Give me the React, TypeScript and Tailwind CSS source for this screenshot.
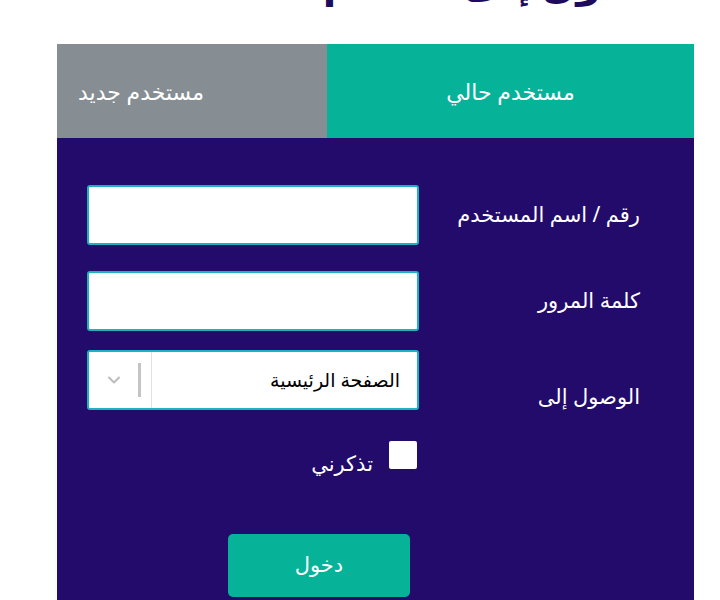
import React, { useState } from 'react'

const font = { fontFamily: '"Noto Sans", "DejaVu Sans", sans-serif' }

const App: React.FC = () => {
  const [tab, setTab] = useState<'current' | 'new'>('current')
  const [remember, setRemember] = useState(false)

  return (
    <div dir="rtl" className="w-[720px] h-[600px] overflow-hidden bg-white" style={font}>
      {/* page title, mostly scrolled out of view */}
      <div className="h-[44px] overflow-hidden">
        <h1 className="pr-[38px] mt-[-47px] text-[40px] leading-[58px] font-bold text-[#1f0b5e] whitespace-nowrap">
          الدخول إلى النظام
        </h1>
      </div>

      <div className="mr-[26px] w-[637px]">
        {/* tabs */}
        <div className="flex h-[94px]">
          <button
            onClick={() => setTab('current')}
            className="w-[367px] h-full bg-[#06b399] text-white text-[22px] flex items-center justify-center"
          >
            مستخدم حالي
          </button>
          <button
            onClick={() => setTab('new')}
            className="flex-1 h-full bg-[#868e94] text-white text-[22px] flex items-center justify-end pl-[21px]"
          >
            مستخدم جديد
          </button>
        </div>

        {/* form */}
        <div className="bg-[#230b6b] pt-[47px] pr-[54px] pl-[30px] pb-10 text-white">
          <div className="flex items-center justify-between">
            <label className="text-[21px]">رقم / اسم المستخدم</label>
            <input className="w-[332px] h-[60px] bg-white rounded-[3px] border-2 border-[#1bb3c4] text-black px-3 outline-none" />
          </div>

          <div className="flex items-center justify-between mt-[26px]">
            <label className="text-[21px]">كلمة المرور</label>
            <input
              type="password"
              className="w-[332px] h-[60px] bg-white rounded-[3px] border-2 border-[#1bb3c4] text-black px-3 outline-none"
            />
          </div>

          <div className="flex items-start justify-between mt-[19px]">
            <label className="text-[21px] mt-[31px]">الوصول إلى</label>
            <div className="w-[332px] h-[60px] bg-white rounded-[3px] border-2 border-[#1bb3c4] flex items-center text-black">
              <span className="flex-1 pr-[17px] text-[19px]">الصفحة الرئيسية</span>
              <div className="w-[63px] h-full border-r border-[#e1e1e1] flex items-center">
                <span className="w-[3px] h-[34px] bg-[#c4c4c4] mr-[10px]" />
                <svg className="w-[20px] h-[20px] mr-[14px]" viewBox="0 0 24 24" fill="none" stroke="#bdbdbd" strokeWidth={2.5} strokeLinecap="round" strokeLinejoin="round">
                  <path d="M6 9l6 6 6-6" />
                </svg>
              </div>
            </div>
          </div>

          <div className="flex items-start mt-[28px] mr-[223px]">
            <button
              onClick={() => setRemember(!remember)}
              className="w-[28px] h-[28px] bg-white rounded-[2px] flex items-center justify-center text-[#230b6b] text-[18px]"
            >
              {remember ? '✓' : ''}
            </button>
            <span className="mr-[16px] mt-[7px] text-[21px] leading-[30px]">تذكرني</span>
          </div>

          <div className="mt-[56px] mr-[230px]">
            <button className="w-[182px] h-[63px] bg-[#06b399] rounded-[5px] text-[21px] text-white">
              دخول
            </button>
          </div>
        </div>
      </div>
    </div>
  )
}

export default App
